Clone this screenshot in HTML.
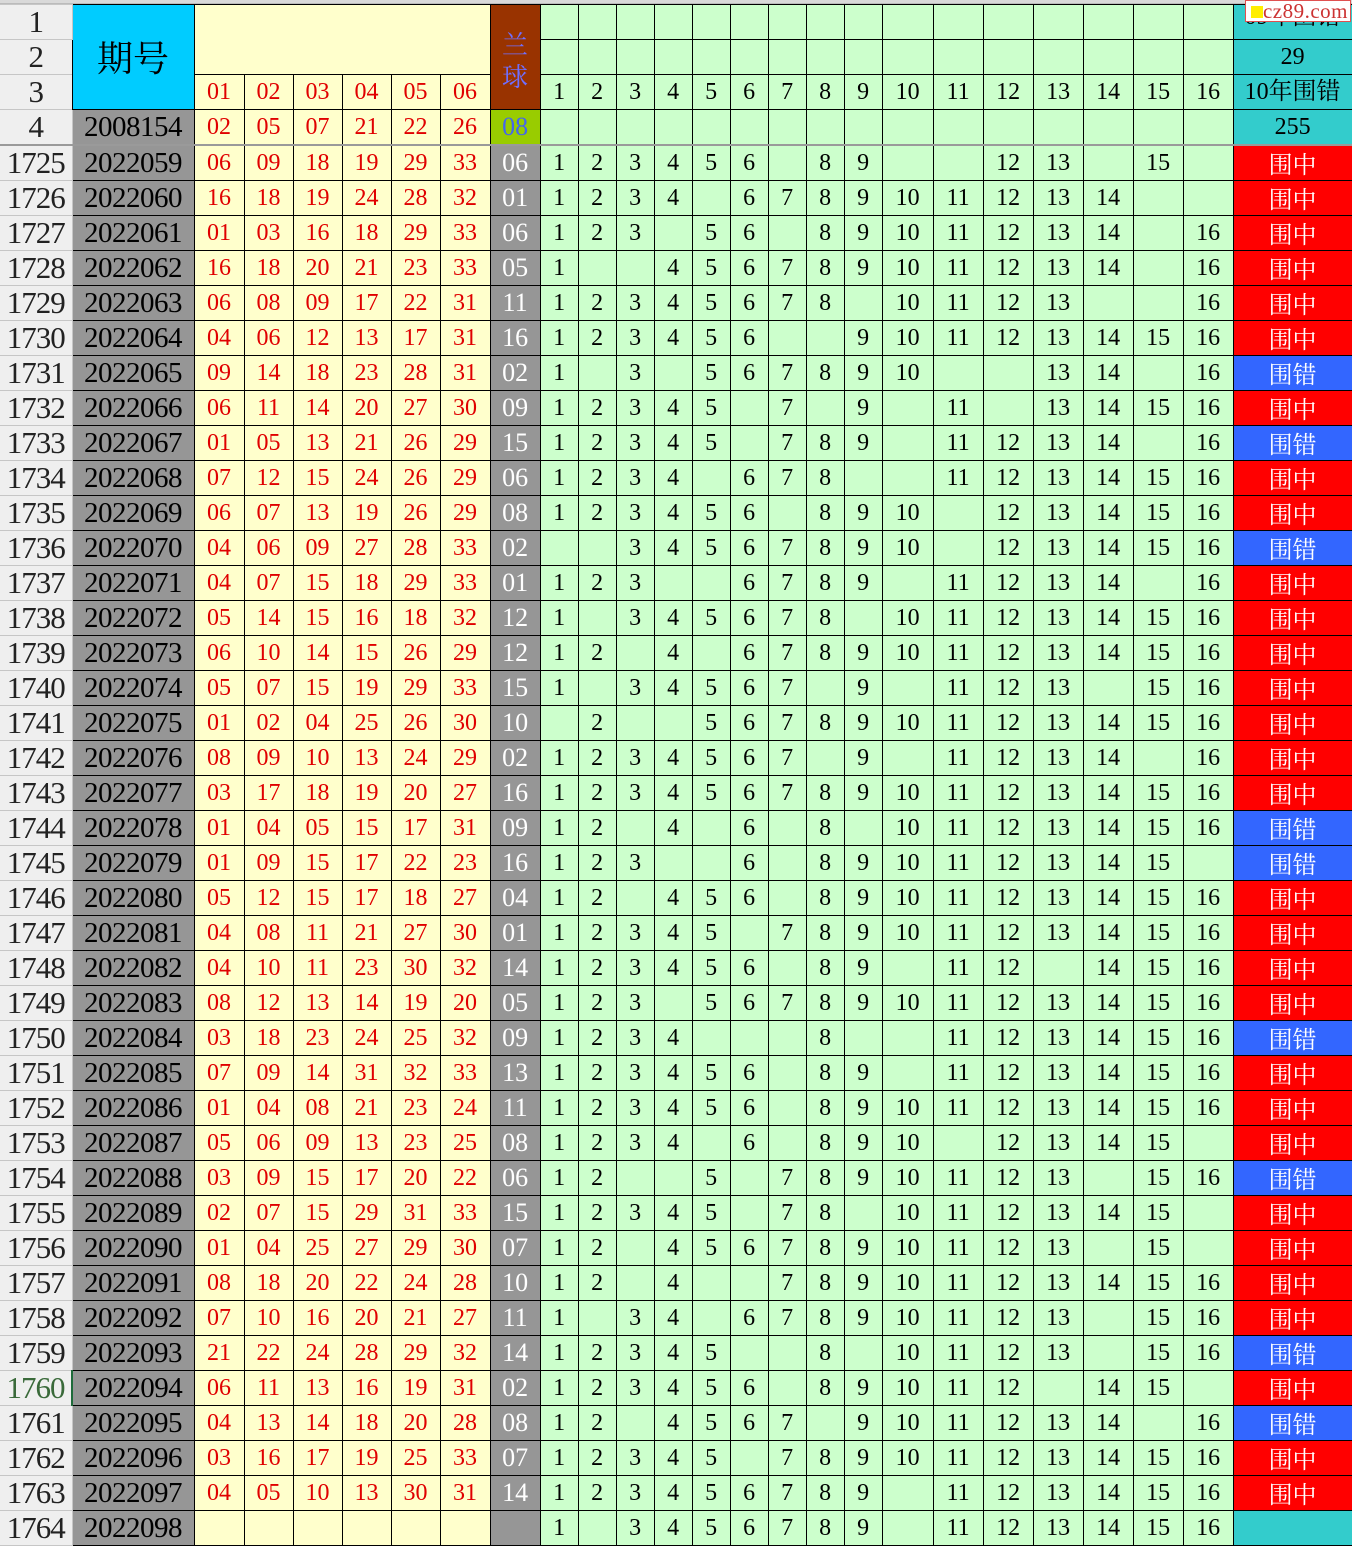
<!DOCTYPE html>
<html><head><meta charset="utf-8"><style>
body{margin:0;width:1352px;height:1544px;overflow:hidden;background:#fff;position:relative}
.top{height:4px;background:#d9d9d9;border-bottom:1px solid #bbb;box-sizing:border-box}
table{border-collapse:collapse;table-layout:fixed;width:1352px}
td{border:1px solid #000;height:34px;padding:0;text-align:center;vertical-align:middle;font:24px "Liberation Serif","Noto Serif CJK SC",serif;overflow:hidden;white-space:nowrap;background:#ccffcc;color:#000;line-height:34px}
td.h{background:#efefef;border-color:#c6c6c6;color:#222;font-size:31px;border-left:none;letter-spacing:-1px}
td.q{background:#969696;font-size:29px;letter-spacing:-0.5px}
td.r{background:#ffffcc;color:#e00000;font-size:24px}
td.b{background:#969696;color:#fff;font-size:26px}
td.z{background:#ff0000;color:#fff;font-family:"Noto Serif CJK SC",serif;font-size:24px}
td.c{background:#3366ff;color:#fff;font-family:"Noto Serif CJK SC",serif;font-size:24px}
td.t{background:#33cccc;font-size:24px;font-family:"Liberation Serif","Noto Serif CJK SC",serif}
tr.f td{border-top:2px solid #9a9a9a}
.logo{position:absolute;right:1px;top:0;width:106px;height:22px;background:#fff;border:1px solid #e05050;font:21px "Liberation Serif",serif;color:#c33;line-height:21px;text-align:right;padding-right:2px;box-sizing:border-box;letter-spacing:0.5px}
.logo i{position:absolute;left:5px;top:5px;width:12px;height:12px;background:#ffee00}
</style></head><body>
<div class="top"></div>
<table>
<colgroup><col style="width:72px"><col style="width:122px"><col style="width:50px"><col style="width:49px"><col style="width:49px"><col style="width:49px"><col style="width:49px"><col style="width:50px"><col style="width:50px"><col style="width:38px"><col style="width:38px"><col style="width:38px"><col style="width:38px"><col style="width:38px"><col style="width:38px"><col style="width:38px"><col style="width:38px"><col style="width:38px"><col style="width:51px"><col style="width:50px"><col style="width:50px"><col style="width:50px"><col style="width:50px"><col style="width:50px"><col style="width:50px"><col style="width:119px"></colgroup>
<tr><td class="h">1</td><td rowspan="3" style="background:#00ccff;font-size:36px;font-family:'Noto Serif CJK SC',serif;line-height:40px">期号</td><td class="r" colspan="6" rowspan="2"></td><td rowspan="3" style="background:#993300;color:#6f6fff;font-size:26px;font-family:'Noto Serif CJK SC',serif;line-height:32px;white-space:normal;word-break:break-all;padding-top:6px">兰<br>球</td><td></td><td></td><td></td><td></td><td></td><td></td><td></td><td></td><td></td><td></td><td></td><td></td><td></td><td></td><td></td><td></td><td class="t" style="line-height:24px;vertical-align:top">09年围错</td></tr>
<tr><td class="h">2</td><td></td><td></td><td></td><td></td><td></td><td></td><td></td><td></td><td></td><td></td><td></td><td></td><td></td><td></td><td></td><td></td><td class="t">29</td></tr>
<tr><td class="h">3</td><td class="r">01</td><td class="r">02</td><td class="r">03</td><td class="r">04</td><td class="r">05</td><td class="r">06</td><td>1</td><td>2</td><td>3</td><td>4</td><td>5</td><td>6</td><td>7</td><td>8</td><td>9</td><td>10</td><td>11</td><td>12</td><td>13</td><td>14</td><td>15</td><td>16</td><td class="t">10年围错</td></tr>
<tr><td class="h">4</td><td class="q">2008154</td><td class="r">02</td><td class="r">05</td><td class="r">07</td><td class="r">21</td><td class="r">22</td><td class="r">26</td><td style="background:#99cc00;color:#4466ee;font-size:26px">08</td><td></td><td></td><td></td><td></td><td></td><td></td><td></td><td></td><td></td><td></td><td></td><td></td><td></td><td></td><td></td><td></td><td class="t">255</td></tr>
<tr class="f"><td class="h">1725</td><td class="q">2022059</td><td class="r">06</td><td class="r">09</td><td class="r">18</td><td class="r">19</td><td class="r">29</td><td class="r">33</td><td class="b">06</td><td>1</td><td>2</td><td>3</td><td>4</td><td>5</td><td>6</td><td></td><td>8</td><td>9</td><td></td><td></td><td>12</td><td>13</td><td></td><td>15</td><td></td><td class="z">围中</td></tr>
<tr><td class="h">1726</td><td class="q">2022060</td><td class="r">16</td><td class="r">18</td><td class="r">19</td><td class="r">24</td><td class="r">28</td><td class="r">32</td><td class="b">01</td><td>1</td><td>2</td><td>3</td><td>4</td><td></td><td>6</td><td>7</td><td>8</td><td>9</td><td>10</td><td>11</td><td>12</td><td>13</td><td>14</td><td></td><td></td><td class="z">围中</td></tr>
<tr><td class="h">1727</td><td class="q">2022061</td><td class="r">01</td><td class="r">03</td><td class="r">16</td><td class="r">18</td><td class="r">29</td><td class="r">33</td><td class="b">06</td><td>1</td><td>2</td><td>3</td><td></td><td>5</td><td>6</td><td></td><td>8</td><td>9</td><td>10</td><td>11</td><td>12</td><td>13</td><td>14</td><td></td><td>16</td><td class="z">围中</td></tr>
<tr><td class="h">1728</td><td class="q">2022062</td><td class="r">16</td><td class="r">18</td><td class="r">20</td><td class="r">21</td><td class="r">23</td><td class="r">33</td><td class="b">05</td><td>1</td><td></td><td></td><td>4</td><td>5</td><td>6</td><td>7</td><td>8</td><td>9</td><td>10</td><td>11</td><td>12</td><td>13</td><td>14</td><td></td><td>16</td><td class="z">围中</td></tr>
<tr><td class="h">1729</td><td class="q">2022063</td><td class="r">06</td><td class="r">08</td><td class="r">09</td><td class="r">17</td><td class="r">22</td><td class="r">31</td><td class="b">11</td><td>1</td><td>2</td><td>3</td><td>4</td><td>5</td><td>6</td><td>7</td><td>8</td><td></td><td>10</td><td>11</td><td>12</td><td>13</td><td></td><td></td><td>16</td><td class="z">围中</td></tr>
<tr><td class="h">1730</td><td class="q">2022064</td><td class="r">04</td><td class="r">06</td><td class="r">12</td><td class="r">13</td><td class="r">17</td><td class="r">31</td><td class="b">16</td><td>1</td><td>2</td><td>3</td><td>4</td><td>5</td><td>6</td><td></td><td></td><td>9</td><td>10</td><td>11</td><td>12</td><td>13</td><td>14</td><td>15</td><td>16</td><td class="z">围中</td></tr>
<tr><td class="h">1731</td><td class="q">2022065</td><td class="r">09</td><td class="r">14</td><td class="r">18</td><td class="r">23</td><td class="r">28</td><td class="r">31</td><td class="b">02</td><td>1</td><td></td><td>3</td><td></td><td>5</td><td>6</td><td>7</td><td>8</td><td>9</td><td>10</td><td></td><td></td><td>13</td><td>14</td><td></td><td>16</td><td class="c">围错</td></tr>
<tr><td class="h">1732</td><td class="q">2022066</td><td class="r">06</td><td class="r">11</td><td class="r">14</td><td class="r">20</td><td class="r">27</td><td class="r">30</td><td class="b">09</td><td>1</td><td>2</td><td>3</td><td>4</td><td>5</td><td></td><td>7</td><td></td><td>9</td><td></td><td>11</td><td></td><td>13</td><td>14</td><td>15</td><td>16</td><td class="z">围中</td></tr>
<tr><td class="h">1733</td><td class="q">2022067</td><td class="r">01</td><td class="r">05</td><td class="r">13</td><td class="r">21</td><td class="r">26</td><td class="r">29</td><td class="b">15</td><td>1</td><td>2</td><td>3</td><td>4</td><td>5</td><td></td><td>7</td><td>8</td><td>9</td><td></td><td>11</td><td>12</td><td>13</td><td>14</td><td></td><td>16</td><td class="c">围错</td></tr>
<tr><td class="h">1734</td><td class="q">2022068</td><td class="r">07</td><td class="r">12</td><td class="r">15</td><td class="r">24</td><td class="r">26</td><td class="r">29</td><td class="b">06</td><td>1</td><td>2</td><td>3</td><td>4</td><td></td><td>6</td><td>7</td><td>8</td><td></td><td></td><td>11</td><td>12</td><td>13</td><td>14</td><td>15</td><td>16</td><td class="z">围中</td></tr>
<tr><td class="h">1735</td><td class="q">2022069</td><td class="r">06</td><td class="r">07</td><td class="r">13</td><td class="r">19</td><td class="r">26</td><td class="r">29</td><td class="b">08</td><td>1</td><td>2</td><td>3</td><td>4</td><td>5</td><td>6</td><td></td><td>8</td><td>9</td><td>10</td><td></td><td>12</td><td>13</td><td>14</td><td>15</td><td>16</td><td class="z">围中</td></tr>
<tr><td class="h">1736</td><td class="q">2022070</td><td class="r">04</td><td class="r">06</td><td class="r">09</td><td class="r">27</td><td class="r">28</td><td class="r">33</td><td class="b">02</td><td></td><td></td><td>3</td><td>4</td><td>5</td><td>6</td><td>7</td><td>8</td><td>9</td><td>10</td><td></td><td>12</td><td>13</td><td>14</td><td>15</td><td>16</td><td class="c">围错</td></tr>
<tr><td class="h">1737</td><td class="q">2022071</td><td class="r">04</td><td class="r">07</td><td class="r">15</td><td class="r">18</td><td class="r">29</td><td class="r">33</td><td class="b">01</td><td>1</td><td>2</td><td>3</td><td></td><td></td><td>6</td><td>7</td><td>8</td><td>9</td><td></td><td>11</td><td>12</td><td>13</td><td>14</td><td></td><td>16</td><td class="z">围中</td></tr>
<tr><td class="h">1738</td><td class="q">2022072</td><td class="r">05</td><td class="r">14</td><td class="r">15</td><td class="r">16</td><td class="r">18</td><td class="r">32</td><td class="b">12</td><td>1</td><td></td><td>3</td><td>4</td><td>5</td><td>6</td><td>7</td><td>8</td><td></td><td>10</td><td>11</td><td>12</td><td>13</td><td>14</td><td>15</td><td>16</td><td class="z">围中</td></tr>
<tr><td class="h">1739</td><td class="q">2022073</td><td class="r">06</td><td class="r">10</td><td class="r">14</td><td class="r">15</td><td class="r">26</td><td class="r">29</td><td class="b">12</td><td>1</td><td>2</td><td></td><td>4</td><td></td><td>6</td><td>7</td><td>8</td><td>9</td><td>10</td><td>11</td><td>12</td><td>13</td><td>14</td><td>15</td><td>16</td><td class="z">围中</td></tr>
<tr><td class="h">1740</td><td class="q">2022074</td><td class="r">05</td><td class="r">07</td><td class="r">15</td><td class="r">19</td><td class="r">29</td><td class="r">33</td><td class="b">15</td><td>1</td><td></td><td>3</td><td>4</td><td>5</td><td>6</td><td>7</td><td></td><td>9</td><td></td><td>11</td><td>12</td><td>13</td><td></td><td>15</td><td>16</td><td class="z">围中</td></tr>
<tr><td class="h">1741</td><td class="q">2022075</td><td class="r">01</td><td class="r">02</td><td class="r">04</td><td class="r">25</td><td class="r">26</td><td class="r">30</td><td class="b">10</td><td></td><td>2</td><td></td><td></td><td>5</td><td>6</td><td>7</td><td>8</td><td>9</td><td>10</td><td>11</td><td>12</td><td>13</td><td>14</td><td>15</td><td>16</td><td class="z">围中</td></tr>
<tr><td class="h">1742</td><td class="q">2022076</td><td class="r">08</td><td class="r">09</td><td class="r">10</td><td class="r">13</td><td class="r">24</td><td class="r">29</td><td class="b">02</td><td>1</td><td>2</td><td>3</td><td>4</td><td>5</td><td>6</td><td>7</td><td></td><td>9</td><td></td><td>11</td><td>12</td><td>13</td><td>14</td><td></td><td>16</td><td class="z">围中</td></tr>
<tr><td class="h">1743</td><td class="q">2022077</td><td class="r">03</td><td class="r">17</td><td class="r">18</td><td class="r">19</td><td class="r">20</td><td class="r">27</td><td class="b">16</td><td>1</td><td>2</td><td>3</td><td>4</td><td>5</td><td>6</td><td>7</td><td>8</td><td>9</td><td>10</td><td>11</td><td>12</td><td>13</td><td>14</td><td>15</td><td>16</td><td class="z">围中</td></tr>
<tr><td class="h">1744</td><td class="q">2022078</td><td class="r">01</td><td class="r">04</td><td class="r">05</td><td class="r">15</td><td class="r">17</td><td class="r">31</td><td class="b">09</td><td>1</td><td>2</td><td></td><td>4</td><td></td><td>6</td><td></td><td>8</td><td></td><td>10</td><td>11</td><td>12</td><td>13</td><td>14</td><td>15</td><td>16</td><td class="c">围错</td></tr>
<tr><td class="h">1745</td><td class="q">2022079</td><td class="r">01</td><td class="r">09</td><td class="r">15</td><td class="r">17</td><td class="r">22</td><td class="r">23</td><td class="b">16</td><td>1</td><td>2</td><td>3</td><td></td><td></td><td>6</td><td></td><td>8</td><td>9</td><td>10</td><td>11</td><td>12</td><td>13</td><td>14</td><td>15</td><td></td><td class="c">围错</td></tr>
<tr><td class="h">1746</td><td class="q">2022080</td><td class="r">05</td><td class="r">12</td><td class="r">15</td><td class="r">17</td><td class="r">18</td><td class="r">27</td><td class="b">04</td><td>1</td><td>2</td><td></td><td>4</td><td>5</td><td>6</td><td></td><td>8</td><td>9</td><td>10</td><td>11</td><td>12</td><td>13</td><td>14</td><td>15</td><td>16</td><td class="z">围中</td></tr>
<tr><td class="h">1747</td><td class="q">2022081</td><td class="r">04</td><td class="r">08</td><td class="r">11</td><td class="r">21</td><td class="r">27</td><td class="r">30</td><td class="b">01</td><td>1</td><td>2</td><td>3</td><td>4</td><td>5</td><td></td><td>7</td><td>8</td><td>9</td><td>10</td><td>11</td><td>12</td><td>13</td><td>14</td><td>15</td><td>16</td><td class="z">围中</td></tr>
<tr><td class="h">1748</td><td class="q">2022082</td><td class="r">04</td><td class="r">10</td><td class="r">11</td><td class="r">23</td><td class="r">30</td><td class="r">32</td><td class="b">14</td><td>1</td><td>2</td><td>3</td><td>4</td><td>5</td><td>6</td><td></td><td>8</td><td>9</td><td></td><td>11</td><td>12</td><td></td><td>14</td><td>15</td><td>16</td><td class="z">围中</td></tr>
<tr><td class="h">1749</td><td class="q">2022083</td><td class="r">08</td><td class="r">12</td><td class="r">13</td><td class="r">14</td><td class="r">19</td><td class="r">20</td><td class="b">05</td><td>1</td><td>2</td><td>3</td><td></td><td>5</td><td>6</td><td>7</td><td>8</td><td>9</td><td>10</td><td>11</td><td>12</td><td>13</td><td>14</td><td>15</td><td>16</td><td class="z">围中</td></tr>
<tr><td class="h">1750</td><td class="q">2022084</td><td class="r">03</td><td class="r">18</td><td class="r">23</td><td class="r">24</td><td class="r">25</td><td class="r">32</td><td class="b">09</td><td>1</td><td>2</td><td>3</td><td>4</td><td></td><td></td><td></td><td>8</td><td></td><td></td><td>11</td><td>12</td><td>13</td><td>14</td><td>15</td><td>16</td><td class="c">围错</td></tr>
<tr><td class="h">1751</td><td class="q">2022085</td><td class="r">07</td><td class="r">09</td><td class="r">14</td><td class="r">31</td><td class="r">32</td><td class="r">33</td><td class="b">13</td><td>1</td><td>2</td><td>3</td><td>4</td><td>5</td><td>6</td><td></td><td>8</td><td>9</td><td></td><td>11</td><td>12</td><td>13</td><td>14</td><td>15</td><td>16</td><td class="z">围中</td></tr>
<tr><td class="h">1752</td><td class="q">2022086</td><td class="r">01</td><td class="r">04</td><td class="r">08</td><td class="r">21</td><td class="r">23</td><td class="r">24</td><td class="b">11</td><td>1</td><td>2</td><td>3</td><td>4</td><td>5</td><td>6</td><td></td><td>8</td><td>9</td><td>10</td><td>11</td><td>12</td><td>13</td><td>14</td><td>15</td><td>16</td><td class="z">围中</td></tr>
<tr><td class="h">1753</td><td class="q">2022087</td><td class="r">05</td><td class="r">06</td><td class="r">09</td><td class="r">13</td><td class="r">23</td><td class="r">25</td><td class="b">08</td><td>1</td><td>2</td><td>3</td><td>4</td><td></td><td>6</td><td></td><td>8</td><td>9</td><td>10</td><td></td><td>12</td><td>13</td><td>14</td><td>15</td><td></td><td class="z">围中</td></tr>
<tr><td class="h">1754</td><td class="q">2022088</td><td class="r">03</td><td class="r">09</td><td class="r">15</td><td class="r">17</td><td class="r">20</td><td class="r">22</td><td class="b">06</td><td>1</td><td>2</td><td></td><td></td><td>5</td><td></td><td>7</td><td>8</td><td>9</td><td>10</td><td>11</td><td>12</td><td>13</td><td></td><td>15</td><td>16</td><td class="c">围错</td></tr>
<tr><td class="h">1755</td><td class="q">2022089</td><td class="r">02</td><td class="r">07</td><td class="r">15</td><td class="r">29</td><td class="r">31</td><td class="r">33</td><td class="b">15</td><td>1</td><td>2</td><td>3</td><td>4</td><td>5</td><td></td><td>7</td><td>8</td><td></td><td>10</td><td>11</td><td>12</td><td>13</td><td>14</td><td>15</td><td></td><td class="z">围中</td></tr>
<tr><td class="h">1756</td><td class="q">2022090</td><td class="r">01</td><td class="r">04</td><td class="r">25</td><td class="r">27</td><td class="r">29</td><td class="r">30</td><td class="b">07</td><td>1</td><td>2</td><td></td><td>4</td><td>5</td><td>6</td><td>7</td><td>8</td><td>9</td><td>10</td><td>11</td><td>12</td><td>13</td><td></td><td>15</td><td></td><td class="z">围中</td></tr>
<tr><td class="h">1757</td><td class="q">2022091</td><td class="r">08</td><td class="r">18</td><td class="r">20</td><td class="r">22</td><td class="r">24</td><td class="r">28</td><td class="b">10</td><td>1</td><td>2</td><td></td><td>4</td><td></td><td></td><td>7</td><td>8</td><td>9</td><td>10</td><td>11</td><td>12</td><td>13</td><td>14</td><td>15</td><td>16</td><td class="z">围中</td></tr>
<tr><td class="h">1758</td><td class="q">2022092</td><td class="r">07</td><td class="r">10</td><td class="r">16</td><td class="r">20</td><td class="r">21</td><td class="r">27</td><td class="b">11</td><td>1</td><td></td><td>3</td><td>4</td><td></td><td>6</td><td>7</td><td>8</td><td>9</td><td>10</td><td>11</td><td>12</td><td>13</td><td></td><td>15</td><td>16</td><td class="z">围中</td></tr>
<tr><td class="h">1759</td><td class="q">2022093</td><td class="r">21</td><td class="r">22</td><td class="r">24</td><td class="r">28</td><td class="r">29</td><td class="r">32</td><td class="b">14</td><td>1</td><td>2</td><td>3</td><td>4</td><td>5</td><td></td><td></td><td>8</td><td></td><td>10</td><td>11</td><td>12</td><td>13</td><td></td><td>15</td><td>16</td><td class="c">围错</td></tr>
<tr><td class="h" style="color:#3a6a3a;border-right:2px solid #1e6b3a">1760</td><td class="q">2022094</td><td class="r">06</td><td class="r">11</td><td class="r">13</td><td class="r">16</td><td class="r">19</td><td class="r">31</td><td class="b">02</td><td>1</td><td>2</td><td>3</td><td>4</td><td>5</td><td>6</td><td></td><td>8</td><td>9</td><td>10</td><td>11</td><td>12</td><td></td><td>14</td><td>15</td><td></td><td class="z">围中</td></tr>
<tr><td class="h">1761</td><td class="q">2022095</td><td class="r">04</td><td class="r">13</td><td class="r">14</td><td class="r">18</td><td class="r">20</td><td class="r">28</td><td class="b">08</td><td>1</td><td>2</td><td></td><td>4</td><td>5</td><td>6</td><td>7</td><td></td><td>9</td><td>10</td><td>11</td><td>12</td><td>13</td><td>14</td><td></td><td>16</td><td class="c">围错</td></tr>
<tr><td class="h">1762</td><td class="q">2022096</td><td class="r">03</td><td class="r">16</td><td class="r">17</td><td class="r">19</td><td class="r">25</td><td class="r">33</td><td class="b">07</td><td>1</td><td>2</td><td>3</td><td>4</td><td>5</td><td></td><td>7</td><td>8</td><td>9</td><td>10</td><td>11</td><td>12</td><td>13</td><td>14</td><td>15</td><td>16</td><td class="z">围中</td></tr>
<tr><td class="h">1763</td><td class="q">2022097</td><td class="r">04</td><td class="r">05</td><td class="r">10</td><td class="r">13</td><td class="r">30</td><td class="r">31</td><td class="b">14</td><td>1</td><td>2</td><td>3</td><td>4</td><td>5</td><td>6</td><td>7</td><td>8</td><td>9</td><td></td><td>11</td><td>12</td><td>13</td><td>14</td><td>15</td><td>16</td><td class="z">围中</td></tr>
<tr><td class="h">1764</td><td class="q">2022098</td><td class="r"></td><td class="r"></td><td class="r"></td><td class="r"></td><td class="r"></td><td class="r"></td><td class="b"></td><td>1</td><td></td><td>3</td><td>4</td><td>5</td><td>6</td><td>7</td><td>8</td><td>9</td><td></td><td>11</td><td>12</td><td>13</td><td>14</td><td>15</td><td>16</td><td class="t"></td></tr>
</table>
<div class="logo"><i></i>cz89.com</div>
</body></html>
